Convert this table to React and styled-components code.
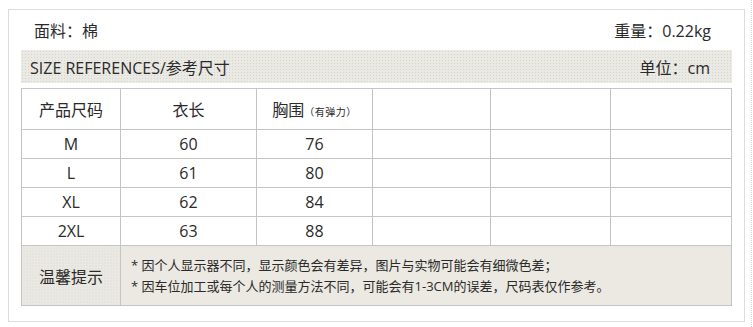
import React from "react";
import styled, { createGlobalStyle } from "styled-components";

const Global = createGlobalStyle`
  html, body { margin: 0; padding: 0; background: #fff; }
  body {
    font-family: "Open Sans", "Noto Sans CJK SC", sans-serif;
    color: #2a2a2a;
  }
`;

const Page = styled.div`
  width: 752px;
  height: 327px;
  box-sizing: border-box;
  padding: 9px 0 0 8px;
  border-right: 1px dotted #d8d8d8;
`;

const Frame = styled.div`
  width: 737px;
  box-sizing: border-box;
  border: 1px solid #dcdcdc;
  padding: 0 12px 15px 12px;
`;

const TopRow = styled.div`
  height: 39px;
  display: flex;
  align-items: center;
  justify-content: space-between;
  padding: 0 21px 1px 13px;
  font-size: 16px;
`;

const Band = styled.div`
  height: 33px;
  display: flex;
  align-items: center;
  justify-content: space-between;
  padding: 0 22px 0 9px;
  font-size: 16px;
  background-color: #ebe9e4;
  background-image: radial-gradient(#d6d4ce 0.7px, transparent 0.8px);
  background-size: 3px 3px;
  margin-bottom: 5px;
`;

const Table = styled.table`
  width: 710px;
  border-collapse: collapse;
  table-layout: fixed;
  font-size: 16px;
`;

const Cell = styled.td`
  border: 1px solid #c4c4c4;
  height: ${(p) => p.$h || 28}px;
  padding: 0;
  text-align: center;
  vertical-align: middle;
  white-space: nowrap;
`;

const Small = styled.span`
  font-size: 10px;
  letter-spacing: 0.5px;
`;

const TipCell = styled(Cell)`
  font-size: 16px;
  background-color: #ebe9e4;
  background-image: radial-gradient(#d6d4ce 0.7px, transparent 0.8px);
  background-size: 3px 3px;
`;

const NoteCell = styled(Cell)`
  text-align: left;
  padding-left: 10px;
  background: #ebe9e2;
  font-size: 13px;
  line-height: 21px;
`;

const cols = [99, 136, 116, 118, 120, 121];
const rows = [
  ["M", "60", "76"],
  ["L", "61", "80"],
  ["XL", "62", "84"],
  ["2XL", "63", "88"],
];

export default function App() {
  return (
    <>
      <Global />
      <Page>
        <Frame>
          <TopRow>
            <span>面料：棉</span>
            <span>重量：0.22kg</span>
          </TopRow>
          <Band>
            <span>SIZE REFERENCES/参考尺寸</span>
            <span>单位：cm</span>
          </Band>
          <Table>
            <colgroup>
              {cols.map((w, i) => (
                <col key={i} style={{ width: w }} />
              ))}
            </colgroup>
            <tbody>
              <tr>
                <Cell $h={40}>产品尺码</Cell>
                <Cell $h={40}>衣长</Cell>
                <Cell $h={40}>
                  胸围<Small>（有弹力）</Small>
                </Cell>
                <Cell $h={40} />
                <Cell $h={40} />
                <Cell $h={40} />
              </tr>
              {rows.map((r) => (
                <tr key={r[0]}>
                  <Cell>{r[0]}</Cell>
                  <Cell>{r[1]}</Cell>
                  <Cell>{r[2]}</Cell>
                  <Cell />
                  <Cell />
                  <Cell />
                </tr>
              ))}
              <tr>
                <TipCell $h={59}>温馨提示</TipCell>
                <NoteCell $h={59} colSpan={5}>
                  * 因个人显示器不同，显示颜色会有差异，图片与实物可能会有细微色差；
                  <br />
                  * 因车位加工或每个人的测量方法不同，可能会有1-3CM的误差，尺码表仅作参考。
                </NoteCell>
              </tr>
            </tbody>
          </Table>
        </Frame>
      </Page>
    </>
  );
}
